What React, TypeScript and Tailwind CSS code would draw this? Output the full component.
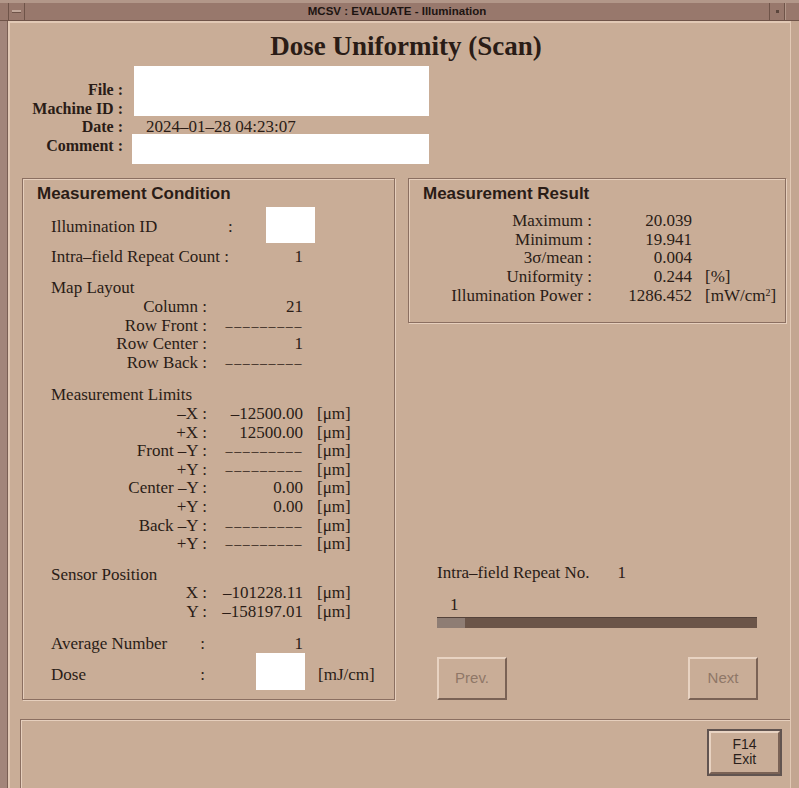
import type { ReactNode } from "react"

// groove border used by motif-style frames
const groove =
  "border border-[#8b6f61] shadow-[inset_1px_1px_0_#e6cfbd,1px_1px_0_#e6cfbd]"

function Dashes() {
  return <span className="text-[14px] leading-[0] tracking-[1.6px]">–––––––––</span>
}

function Line({
  label,
  value,
  unit,
}: {
  label: string
  value?: ReactNode
  unit?: string
}) {
  return (
    <div className="grid grid-cols-[156px_96px_auto] h-[18.6px] leading-[18.6px] whitespace-nowrap">
      <span className="text-right">{label}</span>
      <span className="text-right">{value}</span>
      <span className="pl-[14px]">{unit}</span>
    </div>
  )
}

function ResultLine({
  label,
  value,
  unit,
}: {
  label: string
  value: string
  unit?: ReactNode
}) {
  return (
    <div className="grid grid-cols-[183px_100px_auto] h-[18.7px] leading-[18.7px] whitespace-nowrap">
      <span className="text-right">{label}</span>
      <span className="text-right">{value}</span>
      <span className="pl-[13px]">{unit}</span>
    </div>
  )
}

function Button({ children }: { children: ReactNode }) {
  return (
    <div className="w-[70px] h-[43px] flex items-center justify-center border-2 border-t-[#e8d3c2] border-l-[#e8d3c2] border-b-[#7a6255] border-r-[#7a6255] font-['Liberation_Sans',sans-serif] text-[15px] text-[#8f7767]">
      {children}
    </div>
  )
}

export default function App() {
  return (
    <div className="w-[799px] h-[788px] overflow-hidden flex flex-col bg-[#a2857a] text-[#2a1c16] font-['Liberation_Serif',serif] text-[17px]">
      {/* title bar */}
      <div className="h-[21px] shrink-0 flex bg-[#98786c] border-t-[3px] border-t-[#b29789] border-b border-b-[#6f5449]">
        <div className="w-[8px]" />
        <div className="w-[17px] flex items-center justify-center border-x border-[#6f5449]">
          <div className="w-[9px] h-[3px] bg-[#c2a89b] border-b border-[#6f5449]" />
        </div>
        <div className="flex-1 flex items-center justify-center font-['Liberation_Sans',sans-serif] font-bold text-[11.5px] text-[#1d1411]">
          MCSV : EVALUATE - Illumination
        </div>
        <div className="w-[16px] flex items-center justify-center border-x border-[#6f5449]">
          <div className="w-[3px] h-[3px] bg-[#5b463d]" />
        </div>
        <div className="w-[14px] border-l border-[#b29789]" />
      </div>

      <div className="flex-1 flex min-h-0">
        <div className="w-[8px] border-r border-[#7a5f54]" />

        <div className="flex-1 flex flex-col bg-[#c9ad97] border-l-2 border-t-2 border-[#e2c9b5]">
          <h1 className="pt-[7px] pl-[12px] text-center text-[27px] leading-[32px] font-bold">
            Dose Uniformity (Scan)
          </h1>

          {/* header info */}
          <div className="relative mt-[19px] grid grid-cols-[113px_1fr] leading-[18.7px] whitespace-nowrap">
            <span className="text-right font-bold text-[16px]">File :</span>
            <span />
            <span className="text-right font-bold text-[16px]">Machine ID :</span>
            <span />
            <span className="text-right font-bold text-[16px]">Date :</span>
            <span className="pl-[23px]">2024–01–28 04:23:07</span>
            <span className="text-right font-bold text-[16px]">Comment :</span>
            <span />
            <div className="absolute left-[124px] top-[-15px] w-[295px] h-[50px] bg-white" />
            <div className="absolute left-[122px] top-[53px] w-[297px] h-[30px] bg-white" />
          </div>

          {/* panels */}
          <div className="mt-[22px] pl-[12px] flex gap-[13px]">
            {/* condition */}
            <div className={`w-[373px] h-[522px] ${groove}`}>
              <div className="pt-[5px] pl-[14px] font-['Liberation_Sans',sans-serif] font-bold text-[17px] leading-[20px]">
                Measurement Condition
              </div>
              <div className="pl-[28px]">
                <div className="mt-[3px] h-[36px] flex items-center whitespace-nowrap">
                  <span className="w-[177px] pt-[4px]">Illumination ID</span>
                  <span className="pt-[4px]">:</span>
                  <div className="ml-[33px] w-[49px] h-[36px] bg-white" />
                </div>
                <div className="mt-[5px] w-[252px] flex justify-between leading-[18.6px] whitespace-nowrap">
                  <span>Intra–field Repeat Count :</span>
                  <span>1</span>
                </div>

                <div className="mt-[13px] leading-[18.6px]">Map Layout</div>
                <Line label="Column :" value="21" />
                <Line label="Row Front :" value={<Dashes />} />
                <Line label="Row Center :" value="1" />
                <Line label="Row Back :" value={<Dashes />} />

                <div className="mt-[14px] leading-[18.6px]">Measurement Limits</div>
                <Line label="–X :" value="–12500.00" unit="[μm]" />
                <Line label="+X :" value="12500.00" unit="[μm]" />
                <Line label="Front –Y :" value={<Dashes />} unit="[μm]" />
                <Line label="+Y :" value={<Dashes />} unit="[μm]" />
                <Line label="Center –Y :" value="0.00" unit="[μm]" />
                <Line label="+Y :" value="0.00" unit="[μm]" />
                <Line label="Back –Y :" value={<Dashes />} unit="[μm]" />
                <Line label="+Y :" value={<Dashes />} unit="[μm]" />

                <div className="mt-[12px] leading-[18.6px]">Sensor Position</div>
                <Line label="X :" value="–101228.11" unit="[μm]" />
                <Line label="Y :" value="–158197.01" unit="[μm]" />

                <div className="mt-[13px] grid grid-cols-[156px_96px] leading-[18.6px] whitespace-nowrap">
                  <span className="flex justify-between pr-[2px]">
                    <span>Average Number</span>
                    <span>:</span>
                  </span>
                  <span className="text-right">1</span>
                </div>
                <div className="grid grid-cols-[156px_96px_auto] items-end leading-[18.6px] whitespace-nowrap">
                  <span className="flex justify-between pr-[2px] pb-[6px]">
                    <span>Dose</span>
                    <span>:</span>
                  </span>
                  <div className="ml-auto -mr-[2px] w-[49px] h-[37px] bg-white" />
                  <span className="pl-[15px] pb-[6px]">[mJ/cm]</span>
                </div>
              </div>
            </div>

            {/* result + navigation */}
            <div className="w-[378px] h-[522px] flex flex-col justify-between">
              <div className={`h-[145px] ${groove}`}>
                <div className="pt-[5px] pl-[14px] font-['Liberation_Sans',sans-serif] font-bold text-[17px] leading-[20px]">
                  Measurement Result
                </div>
                <div className="mt-[8px]">
                  <ResultLine label="Maximum :" value="20.039" />
                  <ResultLine label="Minimum :" value="19.941" />
                  <ResultLine label="3σ/mean :" value="0.004" />
                  <ResultLine label="Uniformity :" value="0.244" unit="[%]" />
                  <ResultLine
                    label="Illumination Power :"
                    value="1286.452"
                    unit={
                      <>
                        [mW/cm<sup className="text-[10px] leading-[0]">2</sup>]
                      </>
                    }
                  />
                </div>
              </div>

              <div className="pl-[29px]">
                <div className="flex leading-[18.6px] whitespace-nowrap">
                  <span>Intra–field Repeat No.</span>
                  <span className="ml-[28px]">1</span>
                </div>
                <div className="mt-[13px] pl-[13px] leading-[18px]">1</div>
                <div className="mt-[3px] w-[320px] h-[11px] flex bg-[#6b5549] border-t border-[#54423a]">
                  <div className="w-[28px] bg-[#8e7d74]" />
                </div>
                <div className="mt-[29px] w-[321px] flex justify-between">
                  <Button>Prev.</Button>
                  <Button>Next</Button>
                </div>
              </div>
            </div>
          </div>

          {/* bottom action area */}
          <div className="mt-[19px] ml-[10px] flex-1 flex justify-end items-start pt-[9px] pr-[8px] border-t border-l border-[#8b6f61] shadow-[inset_1px_1px_0_#e6cfbd]">
            <div className="w-[75px] h-[47px] border-2 border-[#615450]">
              <div className="h-full flex flex-col items-center justify-center border-2 border-t-[#e8d3c2] border-l-[#e8d3c2] border-b-[#7a6255] border-r-[#7a6255] font-['Liberation_Sans',sans-serif] text-[14px] leading-[15px] text-[#2a1f1b]">
                <span>F14</span>
                <span>Exit</span>
              </div>
            </div>
          </div>
        </div>

        <div className="w-[9px] bg-[#c3a691] border-l border-[#e2c9b5]" />
      </div>
    </div>
  )
}
